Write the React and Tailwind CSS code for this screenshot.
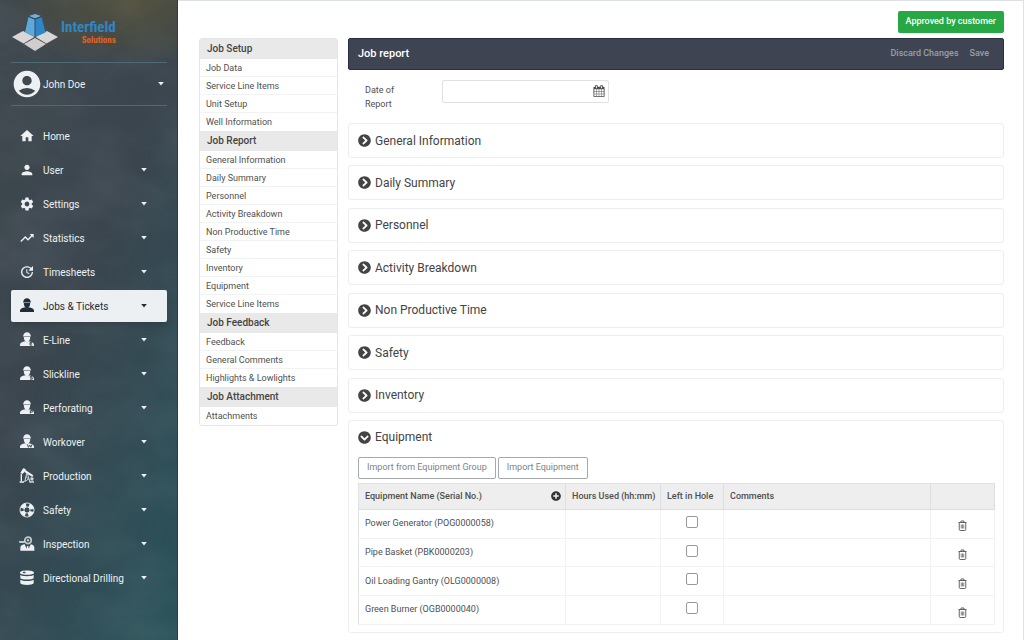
import React, { useState } from 'react';
import { MdHome, MdPerson, MdSettings, MdTrendingUp, MdUpdate, MdAccountCircle } from 'react-icons/md';
import { FaChevronCircleRight, FaChevronCircleDown, FaPlusCircle } from 'react-icons/fa';

const WorkerIcon = ({ badge, ...props }) => (
  <svg viewBox="0 0 24 24" fill="currentColor" {...props}>
    <path d="M6.600 5.400C6.800 2.200 8.900.2 12 .2s5.200 2 5.400 5.200h.4v1.400H6.200V5.400z" />
    <path d="M7.200 7.600h9.600c0 3.600-1.400 5.800-2.800 6.800v1h-4v-1c-1.400-1-2.800-3.200-2.800-6.800z" />
    <path d="M1.500 21v-1.800c0-3 3-4.300 8-5.200.8.900 1.500 1.300 2.500 1.300s1.700-.4 2.500-1.300c5 .9 8 2.200 8 5.200V21z" />
    {badge && (
      <g stroke="#3c4a54" strokeWidth="1.400" fill="none">
        {badge === 'E' && <path d="M20 15.700h-3.500v4H20M16.500 17.700h3" />}
        {badge === 'S' && <path d="M20 15.700h-3v2h3v2h-3.500" />}
        {badge === 'P' && <path d="M17 20.200v-4.500h3v2.500h-3" />}
        {badge === 'W' && <path d="M12.500 15.500l1.700 4.500 1.800-3.500 1.800 3.500 1.700-4.500" />}
      </g>
    )}
  </svg>
);

const PumpIcon = (props) => (
  <svg viewBox="0 0 24 24" fill="currentColor" {...props}>
    <path d="M2 7.500L5.500 1.500c.6-1 2-1.300 3-.5l2 1.500L5.500 9z" />
    <path d="M9 2.700l12.500 8.300-1.500 2.500L8 6z" />
    <path d="M2.500 8.500v11h2V9.500zM1 20h6.500v2H1z" />
    <path d="M11.500 8L8.500 21M12.500 8l4 13M10.500 13l4 3.500-5.500 3.500" fill="none" stroke="currentColor" strokeWidth="1.300" />
    <path d="M17.500 13.500l4.500 1-.8 4.500-4.200-.8zM15.500 20h7v2h-7z" opacity=".85" />
  </svg>
);

const LifeRingIcon = (props) => (
  <svg viewBox="0 0 24 24" fill="none" stroke="currentColor" {...props}>
    <circle cx="12" cy="12" r="10.500" strokeWidth="1.300" />
    <circle cx="12" cy="12" r="4.600" strokeWidth="1.200" />
    <circle cx="12" cy="12" r="7.500" strokeWidth="6" strokeDasharray="7.200 4.580" strokeDashoffset="-2.290" />
  </svg>
);

const InspectionIcon = (props) => (
  <svg viewBox="0 0 24 24" fill="currentColor" {...props}>
    <circle cx="13.500" cy="6.500" r="4.800" fill="none" stroke="currentColor" strokeWidth="2.600" opacity=".75" />
    <circle cx="13.500" cy="6.500" r="1.700" opacity=".9" />
    <path d="M-1 7.500h9.500v3H1z" opacity=".75" />
    <path d="M2 22v-4c0-2.800 2-5 6.500-5.500l2.900 6.500.7-4h1.800l.7 4 2.900-6.500c4 .5 5.500 2.700 5.500 5.500v4z" />
  </svg>
);

const BarrelIcon = (props) => (
  <svg viewBox="0 0 24 24" fill="currentColor" {...props}>
    <path fillRule="evenodd" d="M1.500 4C1.500 2 6 .7 12 .7S22.500 2 22.500 4 18 7.300 12 7.300 1.500 6 1.500 4zm4-.3c0 .7 1 1.100 2.300 1.100s2.200-.4 2.200-1.100-1-1.100-2.200-1.100-2.300.4-2.300 1.100z" />
    <path d="M2 7.500c2 1.200 5.500 1.800 10 1.800s8-.6 10-1.800v4.800c-1.500 1.200-5 2-10 2s-8.500-.8-10-2z" />
    <path d="M2 14.800c2 1.200 5.500 1.800 10 1.800s8-.6 10-1.800v5.200c-1.500 1.500-5 2.500-10 2.500S3.500 21.500 2 20z" />
  </svg>
);

const CalendarIcon = (props) => (
  <svg viewBox="0 0 1792 1792" fill="currentColor" {...props}>
    <path d="M192 1664h288v-288h-288v288zm352 0h320v-288h-320v288zm-352-352h288v-320h-288v320zm352 0h320v-320h-320v320zm-352-384h288v-288h-288v288zm736 736h320v-288h-320v288zm-384-736h320v-288h-320v288zm768 736h288v-288h-288v288zm-384-352h320v-320h-320v320zm-352-864v-288q0-13-9.500-22.500t-22.500-9.500h-64q-13 0-22.500 9.500t-9.500 22.500v288q0 13 9.500 22.500t22.500 9.500h64q13 0 22.500-9.500t9.500-22.500zm736 864h288v-320h-288v320zm-384-384h320v-288h-320v288zm384 0h288v-288h-288v288zm32-480v-288q0-13-9.500-22.500t-22.500-9.500h-64q-13 0-22.500 9.500t-9.500 22.500v288q0 13 9.500 22.500t22.500 9.500h64q13 0 22.500-9.500t9.500-22.500zm384-64v1280q0 52-38 90t-90 38h-1408q-52 0-90-38t-38-90v-1280q0-52 38-90t90-38h128v-96q0-66 47-113t113-47h64q66 0 113 47t47 113v96h384v-96q0-66 47-113t113-47h64q66 0 113 47t47 113v96h128q52 0 90 38t38 90z" />
  </svg>
);

const TrashIcon = (props) => (
  <svg viewBox="0 0 18 22" fill="none" stroke="currentColor" strokeWidth="1.800" {...props}>
    <path d="M1 5h16M6 5V2h6v3M2.500 5v14c0 1 .7 2 1.700 2h9.600c1 0 1.700-1 1.700-2V5" />
    <path d="M6.500 9v8M9 9v8M11.500 9v8" strokeWidth="1.400" />
  </svg>
);

const Caret = () => (
  <svg viewBox="0 0 6 4" className="h-[4px] w-[6px] shrink-0" fill="currentColor">
    <path d="M.2 0h5.600L3 3.500z" />
  </svg>
);

const Logo = () => (
  <svg viewBox="0 0 46 38" className="h-[38px] w-[46px]">
    <path d="M0 23l11-6 11.500 6-11 6.500z" fill="#d9d6d6" />
    <path d="M46 23l-11-6-11.500 6 11 6.500z" fill="#d9d6d6" />
    <path d="M23 24l11 6-11 7-11-7z" fill="#d0cdcd" />
    <path d="M16.500 3L13 18.500l10 4.500V5.500z" fill="#5fa9da" />
    <path d="M29.500 3L33.500 18.500l-10.500 4.500V5.500z" fill="#2f86c6" />
    <path d="M17 2l6-2 6 2-6 2.500z" fill="#6fb2de" />
    <path d="M23 5v18M16.500 2.500L23 5l6.500-2.500" fill="none" stroke="#2c4352" strokeWidth=".9" />
  </svg>
);

const navItems = [
  { label: 'Home', icon: MdHome, plain: true },
  { label: 'User', icon: MdPerson },
  { label: 'Settings', icon: MdSettings },
  { label: 'Statistics', icon: MdTrendingUp },
  { label: 'Timesheets', icon: MdUpdate },
  { label: 'Jobs & Tickets', icon: WorkerIcon, active: true },
  { label: 'E-Line', icon: WorkerIcon, badge: 'E' },
  { label: 'Slickline', icon: WorkerIcon, badge: 'S' },
  { label: 'Perforating', icon: WorkerIcon, badge: 'P' },
  { label: 'Workover', icon: WorkerIcon, badge: 'W' },
  { label: 'Production', icon: PumpIcon },
  { label: 'Safety', icon: LifeRingIcon },
  { label: 'Inspection', icon: InspectionIcon },
  { label: 'Directional Drilling', icon: BarrelIcon },
];

const jobSections = [
  { title: 'Job Setup', items: ['Job Data', 'Service Line Items', 'Unit Setup', 'Well Information'] },
  {
    title: 'Job Report',
    items: [
      'General Information', 'Daily Summary', 'Personnel', 'Activity Breakdown', 'Non Productive Time',
      'Safety', 'Inventory', 'Equipment', 'Service Line Items',
    ],
  },
  { title: 'Job Feedback', items: ['Feedback', 'General Comments', 'Highlights & Lowlights'] },
  { title: 'Job Attachment', items: ['Attachments'] },
];

const panels = [
  'General Information', 'Daily Summary', 'Personnel', 'Activity Breakdown',
  'Non Productive Time', 'Safety', 'Inventory', 'Equipment',
];

const equipment = [
  'Power Generator (POG0000058)',
  'Pipe Basket (PBK0000203)',
  'Oil Loading Gantry (OLG0000008)',
  'Green Burner (OGB0000040)',
];

const Sidebar = () => (
  <aside className="relative w-[178px] shrink-0 overflow-hidden border-r border-[#24404a] bg-[linear-gradient(115deg,#3f474d_0%,#3a454e_45%,#2f4e57_80%,#285258_100%)] text-[#eef1f3]">
    {/* Rock texture behind the menu */}
    <svg className="absolute inset-0 h-full w-full" aria-hidden="true">
      <defs>
        <filter id="rock" x="0" y="0" width="100%" height="100%">
          <feTurbulence type="fractalNoise" baseFrequency="0.012 0.018" numOctaves="6" seed="21" />
          <feColorMatrix values="0 0 0 0 0.45  0 0 0 0 0.52  0 0 0 0 0.56  0.9 0 0 0 -0.33" />
        </filter>
        <radialGradient id="moss" cx="0.75" cy="0" r="0.75">
          <stop offset="0" stopColor="#54503a" stopOpacity=".9" />
          <stop offset=".6" stopColor="#4d4e40" stopOpacity=".6" />
          <stop offset="1" stopColor="#4d4e40" stopOpacity="0" />
        </radialGradient>
      </defs>
      <rect width="100%" height="90" fill="url(#moss)" />
      <rect width="100%" height="100%" filter="url(#rock)" opacity=".22" />
    </svg>
    <div className="relative pt-[14px] pr-[10px] pl-[11px]">
      <a href="#" className="flex h-[48px] gap-[3px] pl-[1px]">
        <Logo />
        <span className="flex flex-col items-end pt-[4px] font-['Liberation_Sans_Narrow','Roboto_Condensed',sans-serif] font-bold">
          <span className="text-[15px] leading-[18px] text-[#2f86c6]">Interfield</span>
          <span className="text-[9px] leading-[9px] text-[#e0651f]">Solutions</span>
        </span>
      </a>
      <button type="button" className="flex h-[44px] w-full items-center border-y border-[#4d6b76] pr-[3px] text-left text-[10px]">
        <MdAccountCircle className="size-8 shrink-0" />
        <span className="grow">John Doe</span>
        <Caret />
      </button>
      <nav className="flex flex-col gap-[2px] pt-[14px]">
        {navItems.map(({ label, icon: Icon, badge, active, plain }) => (
          <a
            key={label}
            href="#"
            className={`flex h-8 items-center rounded-[2px] pr-[20px] pl-[8px] text-[10px] ${
              active ? 'bg-[#edf0f2] text-[#1f2d38] shadow-md' : ''
            }`}
          >
            <Icon className="mr-[8px] size-4 shrink-0" {...(badge ? { badge } : {})} />
            <span className="grow whitespace-nowrap">{label}</span>
            {!plain && <Caret />}
          </a>
        ))}
      </nav>
    </div>
  </aside>
);

const JobNav = () => (
  <nav className="mt-[37px] w-[139px] shrink-0 self-start rounded-[3px] border border-[#e3e6e8]">
    {jobSections.map((section) => (
      <section key={section.title}>
        <h2 className="h-5 bg-[#e9e9e9] pl-[7px] text-[10px] leading-[20px] font-medium text-[#444]">{section.title}</h2>
        <ul>
          {section.items.map((item) => (
            <li key={item} className="h-[18px] border-b border-[#f1f2f3] pl-[6px] text-[9px] leading-[18px] last:border-b-0">
              <a href="#">{item}</a>
            </li>
          ))}
        </ul>
      </section>
    ))}
  </nav>
);

const EquipmentTable = () => (
  <>
    <div className="mb-[4px] flex gap-[2px]">
      {['Import from Equipment Group', 'Import Equipment'].map((text) => (
        <button key={text} type="button" className="h-[22px] rounded-[2px] border border-[#a3a9ae] px-[8px] text-[9px] text-[#7b848c]">
          {text}
        </button>
      ))}
    </div>
    <table className="h-[142px] w-full table-fixed border-collapse border border-[#dfe3e6] text-left text-[9px]">
      <colgroup>
        <col className="w-[207px]" />
        <col className="w-[95px]" />
        <col className="w-[63px]" />
        <col />
        <col className="w-[64px]" />
      </colgroup>
      <thead className="bg-[#eeeeee]">
        <tr className="h-[26px] border-b border-[#dcdfe1] [&>th]:border-r [&>th]:border-[#dcdfe1] [&>th]:pl-[6px] [&>th]:font-medium [&>th]:whitespace-nowrap">
          <th>
            <div className="flex items-center justify-between pr-[4px]">
              Equipment Name (Serial No.)
              <button type="button" aria-label="Add equipment">
                <FaPlusCircle className="size-[10px] text-[#333]" />
              </button>
            </div>
          </th>
          <th>Hours Used (hh:mm)</th>
          <th>Left in Hole</th>
          <th>Comments</th>
          <th aria-label="Actions"></th>
        </tr>
      </thead>
      <tbody>
        {equipment.map((name) => (
          <tr key={name} className="border-b border-[#f1f2f3] [&>td]:border-r [&>td]:border-[#f1f2f3]">
            <td className="px-[6px]">{name}</td>
            <td></td>
            <td className="pb-[4px]">
              <input
                type="checkbox"
                aria-label={`${name} left in hole`}
                className="mx-auto block size-3 appearance-none rounded-[2px] border border-[#999] bg-white checked:bg-[#3f4453]"
              />
            </td>
            <td></td>
            <td className="pt-[4px]">
              <button type="button" aria-label={`Delete ${name}`} className="mx-auto block">
                <TrashIcon className="h-[11px] w-[9px] text-[#555]" />
              </button>
            </td>
          </tr>
        ))}
      </tbody>
    </table>
  </>
);

export default function App() {
  const [open, setOpen] = useState('Equipment');

  return (
    <div className="flex min-h-screen bg-white font-[Roboto,sans-serif] text-[#4f4f4f]">
      <Sidebar />
      <div className="flex grow gap-[10px] border-t border-r border-[#dde2e5] pr-[19px] pl-[21px]">
        <JobNav />
        <main className="flex grow flex-col pt-[10px] pb-[7px]">
          <button type="button" className="h-[22px] self-end rounded-[2px] bg-[#28a745] px-[8px] text-[9px] font-medium text-white">
            Approved by customer
          </button>
          <header className="mt-[5px] flex h-8 items-center gap-[11px] rounded-[2px] border border-[#2a3040] bg-[#3f4453] pr-[14px] pl-[9px] text-[9px] font-medium text-[#9b9fa8]">
            <h1 className="grow text-[11px] text-white">Job report</h1>
            <button type="button">Discard Changes</button>
            <button type="button">Save</button>
          </header>
          <div className="mt-[10px] mb-[12px] flex pl-[17px] text-[9px] leading-[14px]">
            <label htmlFor="report-date" className="mt-[3px] w-[77px] pr-[30px]">Date of Report</label>
            <div className="relative h-[23px]">
              <input id="report-date" type="text" className="h-full w-[167px] rounded-[2px] border border-[#dfe2e4] pr-6 pl-2" />
              <CalendarIcon className="pointer-events-none absolute top-[5px] right-[4px] size-[12px]" />
            </div>
          </div>
          <div className="flex grow flex-col justify-between gap-[7px]">
            {panels.map((panel) => (
              <section key={panel} className="rounded-[3px] border border-[#eceeef] pr-[8px] pl-[9px]">
                <h2 className="text-[12px] text-[#444]">
                  <button
                    type="button"
                    aria-expanded={open === panel}
                    onClick={() => setOpen(open === panel ? '' : panel)}
                    className="flex h-[33px] w-full items-center gap-[4px] text-left"
                  >
                    {open === panel ? <FaChevronCircleDown className="size-[13px]" /> : <FaChevronCircleRight className="size-[13px]" />}
                    {panel}
                  </button>
                </h2>
                {panel === 'Equipment' && open === panel && (
                  <div className="pt-[3px] pb-[7px]">
                    <EquipmentTable />
                  </div>
                )}
              </section>
            ))}
          </div>
        </main>
      </div>
    </div>
  );
}
